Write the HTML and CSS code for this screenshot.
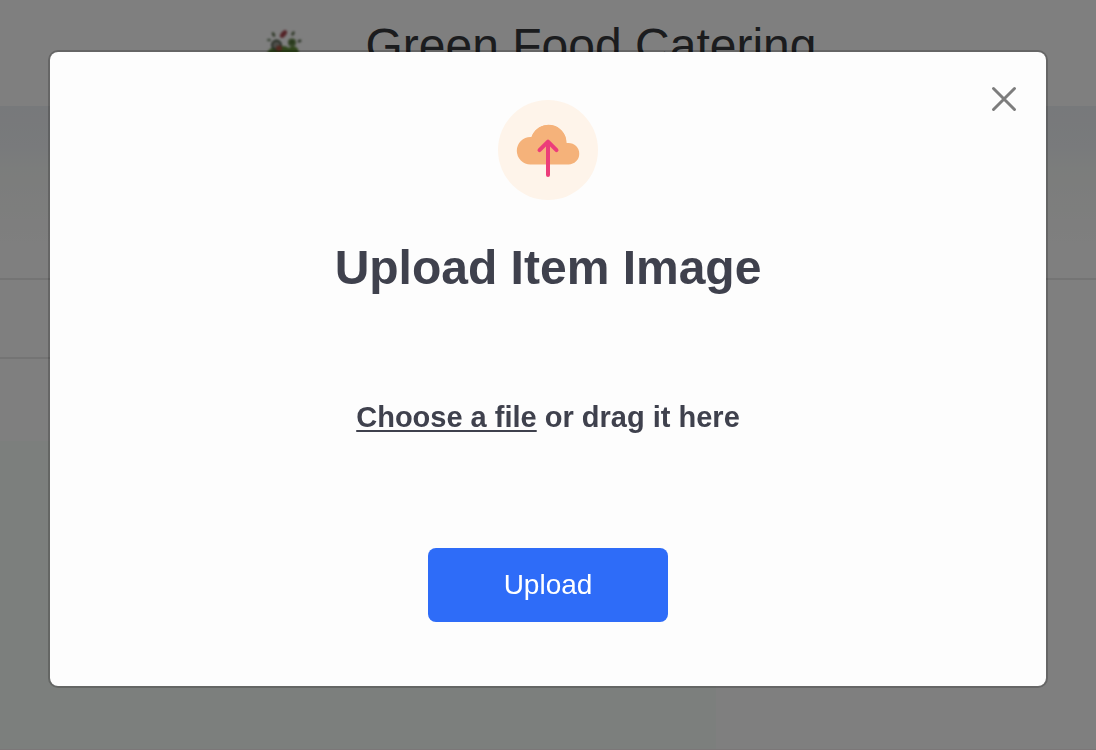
FILE: index.html
```
<!DOCTYPE html>
<html lang="en">
<head>
    <meta charset="UTF-8">
    <meta name="viewport" content="width=device-width, initial-scale=1.0">
    <title>Green Food Catering</title>
    <link rel="stylesheet" href="styles.css">
</head>
<body>

    <div class="page">
        <header class="header">
            <svg class="logo" viewBox="0 0 36 40" aria-hidden="true">
                <ellipse cx="3" cy="14" rx="2" ry="1.3" fill="#6f8568"/>
                <ellipse cx="7.5" cy="8.5" rx="1.4" ry="2.6" fill="#5c6e4c" transform="rotate(-28 7.5 8.5)"/>
                <ellipse cx="17.5" cy="8" rx="2.6" ry="4.6" fill="#a8474f" transform="rotate(38 17.5 8)"/>
                <ellipse cx="27" cy="7.5" rx="1.4" ry="2.5" fill="#5c6e4c" transform="rotate(28 27 7.5)"/>
                <ellipse cx="33.5" cy="15" rx="2" ry="1.4" fill="#52644a" transform="rotate(-20 33.5 15)"/>
                <path d="M1 27C4 21 9 20 13 21c4-2 7-1 10 1 3-3 7-2 9 1l1 5c0 5-6 10-16 10S1 32 1 27z" fill="#5f8a35"/>
                <circle cx="10.5" cy="19" r="4.6" fill="#9a9a92" stroke="#3b4a35" stroke-width="1.6"/>
                <circle cx="26" cy="16.5" r="4" fill="#638548"/>
                <circle cx="26" cy="16" r="1.3" fill="#3f5f2c"/>
                <circle cx="13" cy="22.5" r="3" fill="#a8503f"/>
            </svg>
            <h1 class="site-title">Green Food Catering</h1>
        </header>
        <div class="banner"></div>
        <div class="content">
            <main class="items">
                <div class="items-bar"></div>
                <div class="items-list"></div>
            </main>
            <aside class="sidebar"></aside>
        </div>
    </div>

    <div class="overlay">
        <form class="modal" role="dialog" aria-modal="true" aria-labelledby="modal-title" onsubmit="return false">
            <button class="close" type="button" aria-label="Close">
                <svg viewBox="0 0 28 28" width="28" height="28" aria-hidden="true">
                    <path d="M3.5 3.5l21 21M24.5 3.5l-21 21" fill="none" stroke="#7d7d7d" stroke-width="3" stroke-linecap="round"/>
                </svg>
            </button>

            <svg class="upload-icon" viewBox="0 0 100 100" aria-hidden="true">
                <circle cx="50" cy="50" r="50" fill="#fef4ea"/>
                <path d="M32.5 64.4a13.7 13.7 0 0 1 0-27.4h1.1A17.8 17.8 0 0 1 68.3 42.9h2.2a10.75 10.75 0 0 1 0 21.5z" fill="#f5b27a"/>
                <circle cx="50.5" cy="43" r="18" fill="#f5b27a"/>
                <path d="M50 75V42M41.5 50.2L50 41.6l8.5 8.6" fill="none" stroke="#ec3d7a" stroke-width="4" stroke-linecap="round" stroke-linejoin="round"/>
            </svg>

            <h2 class="modal-title" id="modal-title">Upload Item Image</h2>

            <div class="drop-area">
                <input class="file-input" type="file" id="item-image" accept="image/*">
                <label for="item-image"><span class="choose">Choose a file</span> or drag it here</label>
            </div>

            <button class="upload" type="submit">Upload</button>
        </form>
    </div>

</body>
</html>
```
FILE: styles.css
```
* {
    box-sizing: border-box;
}
body {
    margin: 0;
    font-family: "Liberation Sans", Arial, sans-serif;
    color: #3f414d;
}
.page {
    display: flex;
    flex-direction: column;
    height: 100vh;
    overflow: hidden;
    background-color: #fefefe;
}
.header {
    display: flex;
    justify-content: center;
    align-items: center;
    gap: 64px;
    padding: 18px 14px 32px 0;
}
.logo {
    width: 36px;
    height: 40px;
    filter: blur(1px);
}
.site-title {
    margin: 0;
    font-size: 48px;
    font-weight: normal;
    line-height: 56px;
    color: #37383c;
}
.banner {
    height: 174px;
    background: linear-gradient(#eff2f6, #f2f5f8 24%, #f7faf8 36%, #fbfcfb 60%, #fefefe 80%);
    border-bottom: 2px solid #e8e8e8;
}
.content {
    display: flex;
    flex: 1;
    border-bottom: 1px solid #f6eef0;
}
.items {
    display: flex;
    flex-direction: column;
    flex: 1;
}
.items-bar {
    height: 79px;
    border-bottom: 2px solid #e8e8e8;
}
.items-list {
    flex: 1;
    margin-top: 82px;
    background-color: #f9fefb;
}
.sidebar {
    width: 380px;
}
.overlay {
    position: fixed;
    inset: 0;
    display: flex;
    align-items: flex-start;
    padding: 50px 48px;
    background-color: rgba(0, 0, 0, 0.5);
}
.modal {
    position: relative;
    display: flex;
    flex-direction: column;
    align-items: center;
    width: 100%;
    padding: 48px 32px 64px;
    background-color: #fdfdfd;
    background-clip: padding-box;
    border: 2px solid rgba(0, 0, 0, 0.2);
    border-radius: 10px;
}
.close {
    position: absolute;
    top: 33px;
    right: 28px;
    padding: 0;
    background: none;
    border: none;
    cursor: pointer;
}
.close svg {
    display: block;
}
.upload-icon {
    width: 100px;
    height: 100px;
}
.modal-title {
    margin: 40px 0 0;
    font-size: 48px;
    line-height: 56px;
    text-align: center;
}
.drop-area {
    padding: 104px 0 114px;
    font-size: 29px;
    font-weight: bold;
    line-height: 34px;
    text-align: center;
}
.drop-area label {
    cursor: pointer;
}
.choose {
    text-decoration: underline;
    text-decoration-thickness: 2px;
    text-underline-offset: 3px;
}
.file-input {
    position: absolute;
    width: 1px;
    height: 1px;
    opacity: 0;
}
.upload {
    width: 240px;
    height: 74px;
    font-family: inherit;
    font-size: 28px;
    color: #fff;
    background-color: #2e6cf8;
    border: none;
    border-radius: 8px;
    cursor: pointer;
}
.upload:hover {
    background-color: #1f5ce6;
}
```
